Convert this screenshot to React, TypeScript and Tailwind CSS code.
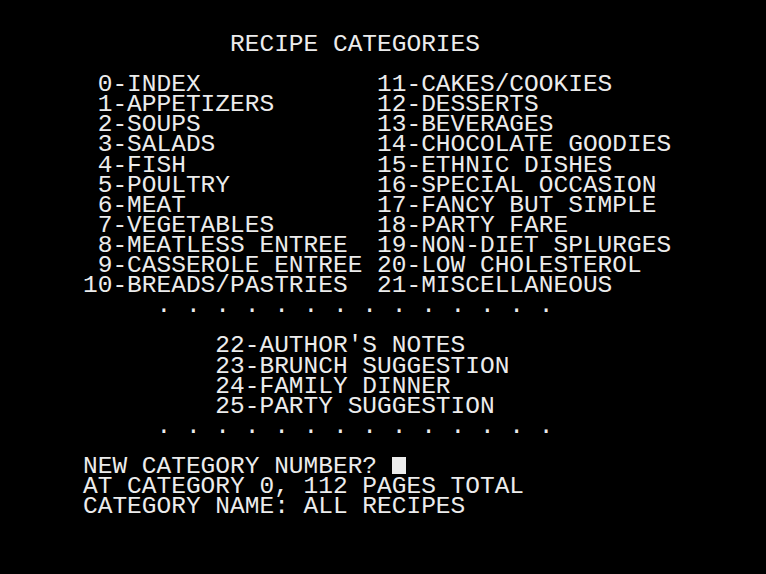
const LEFT = [
  ' 0-INDEX',
  ' 1-APPETIZERS',
  ' 2-SOUPS',
  ' 3-SALADS',
  ' 4-FISH',
  ' 5-POULTRY',
  ' 6-MEAT',
  ' 7-VEGETABLES',
  ' 8-MEATLESS ENTREE',
  ' 9-CASSEROLE ENTREE',
  '10-BREADS/PASTRIES',
];

const RIGHT = [
  '11-CAKES/COOKIES',
  '12-DESSERTS',
  '13-BEVERAGES',
  '14-CHOCOLATE GOODIES',
  '15-ETHNIC DISHES',
  '16-SPECIAL OCCASION',
  '17-FANCY BUT SIMPLE',
  '18-PARTY FARE',
  '19-NON-DIET SPLURGES',
  '20-LOW CHOLESTEROL',
  '21-MISCELLANEOUS',
];

const NOTES = [
  '22-AUTHOR\'S NOTES',
  '23-BRUNCH SUGGESTION',
  '24-FAMILY DINNER',
  '25-PARTY SUGGESTION',
];

const DOTS = '     ' + '. '.repeat(14).trimEnd();

export default function App() {
  const lines: string[] = [
    '          RECIPE CATEGORIES',
    '',
    ...LEFT.map((l, i) => l.padEnd(20) + RIGHT[i]),
    DOTS,
    '',
    ...NOTES.map((n) => '         ' + n),
    DOTS,
    '',
  ];

  return (
    <div className="w-[766px] h-[574px] bg-black overflow-hidden">
      <pre className="pt-[35px] pl-[83px] m-0 font-['Liberation_Mono',monospace] text-[24.5px] leading-[20.1px] text-[#ececec] whitespace-pre">
        {lines.map((l, i) => (
          <div key={i} className="h-[20.1px]">
            {l}
          </div>
        ))}
        <div className="h-[20.1px]">
          NEW CATEGORY NUMBER?{' '}
          <span className="inline-block w-[14.7px] h-[17px] align-top bg-[#ececec]" />
        </div>
        <div className="h-[20.1px]">AT CATEGORY 0, 112 PAGES TOTAL</div>
        <div className="h-[20.1px]">CATEGORY NAME: ALL RECIPES</div>
      </pre>
    </div>
  );
}
